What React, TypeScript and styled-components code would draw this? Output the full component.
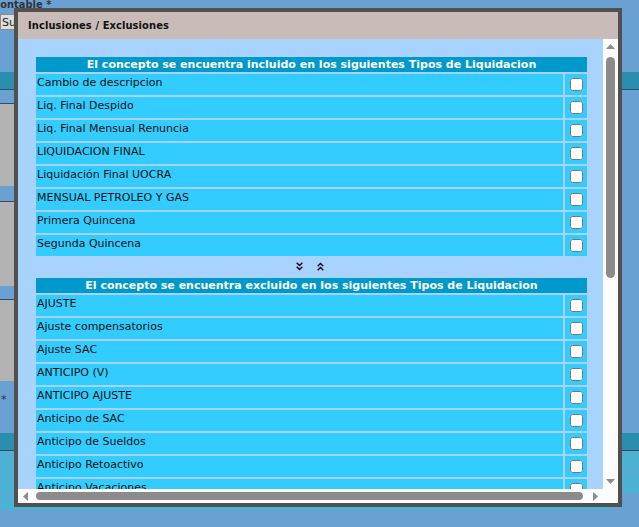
import React from "react";
import styled, { createGlobalStyle } from "styled-components";

const GlobalStyle = createGlobalStyle`
  html, body {
    margin: 0;
    padding: 0;
    background: #6ba0d3;
    overflow: hidden;
  }
  body {
    font-family: "DejaVu Sans", Verdana, sans-serif;
  }
`;

/* ---------- form behind the dialog ---------- */

const Backdrop = styled.div`
  display: flex;
  flex-direction: column;
  width: 639px;
  height: 527px;
  overflow: hidden;
`;

const FieldLabel = styled.div`
  margin: -2px 0 0 -7px;
  height: 14px;
  font: bold 11px "DejaVu Sans Condensed", "DejaVu Sans", sans-serif;
  color: #333;
`;

const FieldSelect = styled.select`
  appearance: none;
  margin: 2px 0 0 0;
  width: 160px;
  height: 16px;
  padding: 0 0 0 1px;
  border: 1px solid #8a8a8a;
  border-radius: 0;
  background: #dedede;
  font: 11px "DejaVu Sans", sans-serif;
  color: #222;
`;

const Band = styled.div<{ $top: number; $height: number }>`
  margin-top: ${(p) => p.$top}px;
  height: ${(p) => p.$height}px;
  background: #2b8eae;
  border-bottom: 1px solid #2f4f5c;
`;

const GreyPanel = styled.div<{ $top: number; $height: number }>`
  margin-top: ${(p) => p.$top}px;
  height: ${(p) => p.$height}px;
  width: 220px;
  background: #b3b3b3;
  border-top: 1px solid #3c4a55;
`;

const StarRow = styled.div`
  height: 52px;
  padding: 12px 0 0 1px;
  box-sizing: border-box;
  font: 11px "DejaVu Sans", sans-serif;
  color: #24344c;
`;

const LightRow = styled.div<{ $height: number; $width?: number }>`
  margin-top: 1px;
  height: ${(p) => p.$height}px;
  width: ${(p) => (p.$width ? `${p.$width}px` : "100%")};
  background: #4cb1d3;
`;

/* ---------- dialog ---------- */

const Dialog = styled.div`
  position: fixed;
  left: 14px;
  top: 8px;
  width: 608px;
  height: 499px;
  box-sizing: border-box;
  border: 4px solid #505050;
  display: flex;
  flex-direction: column;
  background: #a8d3ff;
`;

const TitleBar = styled.div`
  flex: 0 0 27px;
  background: #c9bcb8;
  padding: 1px 0 0 10px;
  box-sizing: border-box;
  font: bold 11px/26px "DejaVu Sans Condensed", "DejaVu Sans", sans-serif;
  letter-spacing: 0.1px;
  color: #111;
`;

const DialogBody = styled.div`
  flex: 1 1 auto;
  display: grid;
  grid-template-columns: 585px 15px;
  grid-template-rows: 450px 14px;
`;

const Viewport = styled.div`
  overflow: hidden;
  background: #a8d3ff;
`;

/* scroll bars of the list viewport */

const barColor = "#8b8b8b";
const trackColor = "#fdfdfd";

const VScroll = styled.div`
  display: flex;
  flex-direction: column;
  background: ${trackColor};
`;

const HScroll = styled.div`
  display: flex;
  background: ${trackColor};
`;

const Corner = styled.div`
  background: ${trackColor};
`;

const ArrowButton = styled.div`
  flex: 0 0 15px;
  display: flex;
  align-items: center;
  justify-content: center;
  svg {
    display: block;
  }
`;

const VTrack = styled.div`
  flex: 1 1 auto;
  padding: 3px 0 0 3px;
`;

const VThumb = styled.div`
  width: 9px;
  height: 221px;
  border-radius: 5px;
  background: ${barColor};
`;

const HTrack = styled.div`
  flex: 1 1 auto;
  padding: 3px 0 0 3px;
`;

const HThumb = styled.div`
  width: 547px;
  height: 8px;
  border-radius: 4px;
  background: ${barColor};
`;

type Dir = "up" | "down" | "left" | "right";

const triangle: Record<Dir, { w: number; h: number; pts: string }> = {
  up: { w: 9, h: 5, pts: "0,5 4.5,0 9,5" },
  down: { w: 9, h: 5, pts: "0,0 9,0 4.5,5" },
  left: { w: 5, h: 9, pts: "5,0 5,9 0,4.5" },
  right: { w: 5, h: 9, pts: "0,0 5,4.5 0,9" },
};

const Arrow = ({ dir }: { dir: Dir }) => {
  const t = triangle[dir];
  return (
    <ArrowButton>
      <svg width={t.w} height={t.h} viewBox={`0 0 ${t.w} ${t.h}`}>
        <polygon points={t.pts} fill={barColor} />
      </svg>
    </ArrowButton>
  );
};

/* list content */

const ScrollContent = styled.div`
  width: 588px;
  box-sizing: border-box;
  padding: 18px 0 27px 18px;
`;

const TypeTable = styled.div`
  width: 551px;
  display: flex;
  flex-direction: column;
  gap: 2px;
`;

const TableHeader = styled.div`
  height: 15px;
  background: #0099cc;
  color: #fff;
  text-align: center;
  font: bold 11px/15px "DejaVu Sans", Verdana, sans-serif;
  white-space: nowrap;
`;

const Row = styled.div`
  display: grid;
  grid-template-columns: 527px 22px;
  column-gap: 2px;
  height: 21px;
`;

const NameCell = styled.div`
  background: #33ccff;
  padding: 2px 0 0 1px;
  box-sizing: border-box;
  font: 11px/13px "DejaVu Sans", Verdana, sans-serif;
  color: #111;
  white-space: nowrap;
  overflow: hidden;
`;

const CheckCell = styled.div`
  background: #33ccff;
  display: flex;
  align-items: center;
  padding-left: 1px;
  box-sizing: border-box;
`;

const Check = styled.input`
  margin: 0 0 0 4px;
  width: 13px;
  height: 13px;
`;

const MoveBar = styled.div`
  width: 551px;
  height: 22px;
  display: flex;
  justify-content: center;
  align-items: flex-start;
  gap: 14px;
  padding: 6px 4px 0 0;
  box-sizing: border-box;
`;

const MoveButton = styled.button`
  all: unset;
  display: block;
  width: 7px;
  height: 9px;
  cursor: pointer;
  svg {
    display: block;
  }
`;

const DoubleChevron = ({ up }: { up?: boolean }) => (
  <svg width="7" height="9" viewBox="0 0 7 9">
    <g
      fill="none"
      stroke="#000"
      strokeWidth="1.4"
      transform={up ? "rotate(180 3.5 4.5)" : undefined}
    >
      <path d="M0.7 0.8 L3.5 3.6 L6.3 0.8" />
      <path d="M0.7 4.8 L3.5 7.6 L6.3 4.8" />
    </g>
  </svg>
);

const included = [
  "Cambio de descripcion",
  "Liq. Final Despido",
  "Liq. Final Mensual Renuncia",
  "LIQUIDACION FINAL",
  "Liquidación Final UOCRA",
  "MENSUAL PETROLEO Y GAS",
  "Primera Quincena",
  "Segunda Quincena",
];

const excluded = [
  "AJUSTE",
  "Ajuste compensatorios",
  "Ajuste SAC",
  "ANTICIPO (V)",
  "ANTICIPO AJUSTE",
  "Anticipo de SAC",
  "Anticipo de Sueldos",
  "Anticipo Retoactivo",
  "Anticipo Vacaciones",
  "Bonificación Especial",
  "Complementaria",
  "Devolución de Ganancias",
  "Diferencias de Sueldo",
  "Horas Extras",
  "Liq. Final Fallecimiento",
  "Liquidación Mensual",
  "MENSUAL",
  "Mensual Jornalizados",
  "Premios",
  "Quincenal",
  "Retroactivo",
  "SAC Primer Semestre",
  "SAC Segundo Semestre",
  "Vacaciones",
];

const TypeList = ({ title, items }: { title: string; items: string[] }) => (
  <TypeTable>
    <TableHeader>{title}</TableHeader>
    {items.map((name) => (
      <Row key={name}>
        <NameCell>{name}</NameCell>
        <CheckCell>
          <Check type="checkbox" />
        </CheckCell>
      </Row>
    ))}
  </TypeTable>
);

export default function App() {
  return (
    <>
      <GlobalStyle />
      <Backdrop>
        <FieldLabel>Contable *</FieldLabel>
        <FieldSelect defaultValue="s">
          <option value="s">Sueldos y Jornales</option>
        </FieldSelect>
        <Band $top={42} $height={17} />
        <GreyPanel $top={13} $height={82} />
        <GreyPanel $top={15} $height={84} />
        <GreyPanel $top={13} $height={81} />
        <StarRow>*</StarRow>
        <Band $top={0} $height={17} />
        <LightRow $height={20} />
        <LightRow $height={20} />
        <LightRow $height={16} $width={610} />
      </Backdrop>
      <Dialog>
        <TitleBar>Inclusiones / Exclusiones</TitleBar>
        <DialogBody>
          <Viewport>
            <ScrollContent>
              <TypeList
                title="El concepto se encuentra incluido en los siguientes Tipos de Liquidacion"
                items={included}
              />
              <MoveBar>
                <MoveButton title="Excluir">
                  <DoubleChevron />
                </MoveButton>
                <MoveButton title="Incluir">
                  <DoubleChevron up />
                </MoveButton>
              </MoveBar>
              <TypeList
                title="El concepto se encuentra excluido en los siguientes Tipos de Liquidacion"
                items={excluded}
              />
            </ScrollContent>
          </Viewport>
          <VScroll>
            <Arrow dir="up" />
            <VTrack>
              <VThumb />
            </VTrack>
            <Arrow dir="down" />
          </VScroll>
          <HScroll>
            <Arrow dir="left" />
            <HTrack>
              <HThumb />
            </HTrack>
            <Arrow dir="right" />
          </HScroll>
          <Corner />
        </DialogBody>
      </Dialog>
    </>
  );
}
